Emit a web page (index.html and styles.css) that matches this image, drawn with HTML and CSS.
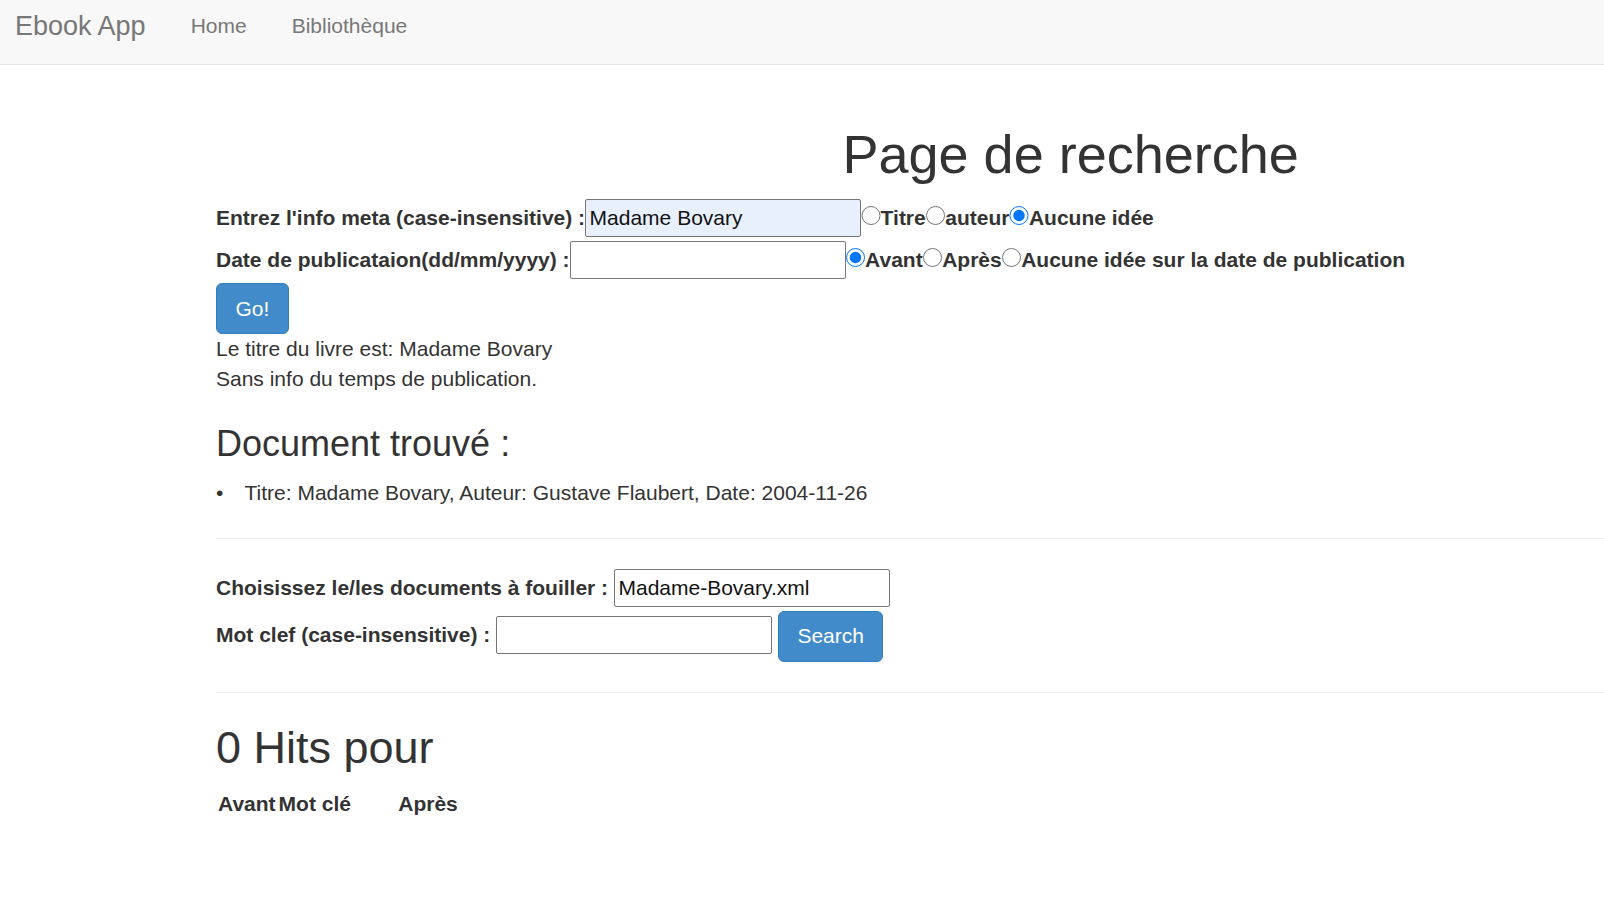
FILE: index.html
```html
<!DOCTYPE html>
<html lang="fr">
<head>
<meta charset="utf-8">
<title>Ebook App</title>
<link rel="stylesheet" href="styles.css">
</head>
<body>
<nav class="navbar">
  <a class="brand" href="#">Ebook App</a>
  <ul class="nav">
    <li><a href="#">Home</a></li>
    <li><a href="#">Bibliothèque</a></li>
  </ul>
</nav>
<main class="main">
  <h1 class="page-title">Page de recherche</h1>
  <form class="meta-form">
    <div class="form-line"><label class="lbl" for="meta">Entrez l'info meta (case-insensitive) :</label><input class="text-input autofilled" id="meta" type="text" value="Madame Bovary"><input class="radio" type="radio" name="kind" id="k1"><label class="lbl" for="k1">Titre</label><input class="radio" type="radio" name="kind" id="k2"><label class="lbl" for="k2">auteur</label><input class="radio" type="radio" name="kind" id="k3" checked><label class="lbl" for="k3">Aucune idée</label></div>
    <div class="form-line"><label class="lbl" for="date">Date de publicataion(dd/mm/yyyy) :</label><input class="text-input" id="date" type="text"><input class="radio" type="radio" name="when" id="w1" checked><label class="lbl" for="w1">Avant</label><input class="radio" type="radio" name="when" id="w2"><label class="lbl" for="w2">Après</label><input class="radio" type="radio" name="when" id="w3"><label class="lbl" for="w3">Aucune idée sur la date de publication</label></div>
    <div class="form-line"><button class="btn" type="button">Go!</button></div>
  </form>
  <div class="result-info">
    <div>Le titre du livre est: Madame Bovary</div>
    <div>Sans info du temps de publication.</div>
  </div>
  <h3 class="section-title">Document trouvé :</h3>
  <ul class="doc-list">
    <li>Titre: Madame Bovary, Auteur: Gustave Flaubert, Date: 2004-11-26</li>
  </ul>
  <hr class="sep">
  <form class="search-form">
    <div class="form-line"><label class="lbl" for="docs">Choisissez le/les documents à fouiller :</label> <input class="text-input" id="docs" type="text" value="Madame-Bovary.xml"></div>
    <div class="form-line"><label class="lbl" for="kw">Mot clef (case-insensitive) :</label> <input class="text-input" id="kw" type="text"> <button class="btn" type="button">Search</button></div>
  </form>
  <hr class="sep">
  <h2 class="hits-title">0 Hits pour</h2>
  <table class="hits-table">
    <thead>
      <tr><th>Avant</th><th class="col-key">Mot clé</th><th>Après</th></tr>
    </thead>
    <tbody></tbody>
  </table>
</main>
</body>
</html>
```
FILE: styles.css
```css
* {
  box-sizing: border-box;
}

html,
body {
  margin: 0;
  padding: 0;
}

body {
  font-family: "Liberation Sans", Arial, Helvetica, sans-serif;
  font-size: 21px;
  line-height: 30px;
  color: #333;
  background: #fff;
}

/* Navbar */
.navbar {
  display: flex;
  align-items: flex-start;
  height: 65px;
  padding-top: 11px;
  background: #f8f8f8;
  border-bottom: 1px solid #e7e7e7;
}

.brand {
  display: block;
  padding: 0 22.5px 0 15px;
  font-size: 27px;
  line-height: 30px;
  color: #777;
  text-decoration: none;
}

.nav {
  display: flex;
  margin: 0;
  padding: 0;
  list-style: none;
}

.nav a {
  display: block;
  padding: 0 22.5px;
  font-size: 21px;
  line-height: 30px;
  color: #777;
  text-decoration: none;
}

/* Main */
.main {
  padding: 60px 0 0 216px;
}

.page-title {
  margin: 0 0 15px;
  padding-left: 626.5px;
  font-size: 54px;
  line-height: 59.4px;
  font-weight: 500;
  color: #333;
}

.meta-form,
.search-form {
  margin: 0;
}

.form-line {
  font-size: 21px;
  line-height: 30px;
  white-space: nowrap;
}

.lbl {
  display: inline-block;
  margin-bottom: 8px;
  font-weight: bold;
  vertical-align: baseline;
}

.text-input {
  width: 276px;
  height: 38px;
  margin: 0;
  padding: 0 3.5px;
  border: 1px solid #767676;
  border-radius: 2px;
  font-family: inherit;
  font-size: 21px;
  line-height: normal;
  color: #111;
  background: #fff;
  vertical-align: baseline;
  outline: none;
}

.text-input.autofilled {
  background: #e8f0fe;
}

.radio {
  width: 19.5px;
  height: 19.5px;
  margin: 6px 0 0;
  vertical-align: baseline;
}

.btn {
  display: inline-block;
  margin: 0;
  padding: 9.5px 18.5px;
  font-family: inherit;
  font-size: 21px;
  line-height: 30px;
  font-weight: normal;
  color: #fff;
  background: #428bca;
  border: 1px solid #357ebd;
  border-radius: 6px;
  vertical-align: middle;
  white-space: nowrap;
  cursor: pointer;
}

.result-info {
  margin: 0;
}

.section-title {
  margin: 30px 0 13.5px;
  font-size: 36px;
  line-height: 39.6px;
  font-weight: 500;
}

.doc-list {
  margin: 0 0 15px;
  padding: 0;
  list-style: none;
}

.doc-list li::before {
  content: "\2022";
  display: inline-block;
  width: 28.5px;
}

.sep {
  height: 0;
  margin: 30px 0;
  border: 0;
  border-top: 1px solid #eee;
}

.hits-title {
  margin: 30px 0 17px;
  font-size: 45px;
  line-height: 49.5px;
  font-weight: 500;
}

.hits-table {
  margin-left: -1px;
  border-collapse: separate;
  border-spacing: 3px 0;
}

.hits-table th {
  padding: 0;
  text-align: left;
  font-weight: bold;
  line-height: 30px;
}

.hits-table .col-key {
  width: 116.7px;
}
```
